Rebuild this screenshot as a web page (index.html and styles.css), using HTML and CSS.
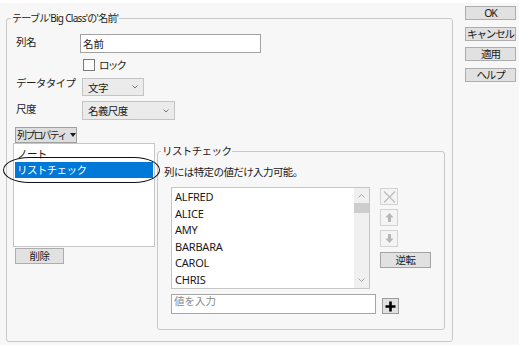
FILE: index.html
```html
<!DOCTYPE html>
<html>
  <head>
    <meta charset="utf-8" />
    <link rel="stylesheet" href="styles.css">
  </head>
  <body>
    <div class="window">
      <fieldset class="main">
        <legend>テーブル'Big Class'の'名前'</legend>
        <div class="form">
          <label class="lbl">列名</label>
          <input class="name" type="text" value="名前" />
          <span></span>
          <label class="lock"><span class="box"></span>ロック</label>
          <label class="lbl up">データタイプ</label>
          <div class="combo type">
            文字
            <svg width="6" height="4" viewBox="0 0 6 4"><polyline points="0.5,0.5 3,3 5.5,0.5" /></svg>
          </div>
          <label class="lbl">尺度</label>
          <div class="combo scale">
            名義尺度
            <svg width="6" height="4" viewBox="0 0 6 4"><polyline points="0.5,0.5 3,3 5.5,0.5" /></svg>
          </div>
        </div>
        <button class="props">列プロパティ<span class="tri"></span></button>
        <div class="lower">
          <div class="left">
            <div class="plist">
              <div class="item">ノート</div>
              <div class="item sel">リストチェック</div>
            </div>
            <button class="del">削除</button>
            <div class="ring"></div>
          </div>
          <fieldset class="check">
            <legend>リストチェック</legend>
            <div class="note">列には特定の値だけ入力可能。</div>
            <div class="values">
              <div class="vlist">
                <div class="rows">
                  <div class="row">ALFRED</div>
                  <div class="row">ALICE</div>
                  <div class="row">AMY</div>
                  <div class="row">BARBARA</div>
                  <div class="row">CAROL</div>
                  <div class="row">CHRIS</div>
                </div>
                <div class="scroll">
                  <svg class="caret" width="7" height="4" viewBox="0 0 7 4"><polyline points="0.5,3.5 3.5,0.5 6.5,3.5" /></svg>
                  <div class="thumb"></div>
                  <div class="track"></div>
                  <svg class="caret" width="7" height="4" viewBox="0 0 7 4"><polyline points="0.5,0.5 3.5,3.5 6.5,0.5" /></svg>
                </div>
              </div>
              <div class="tools">
                <button class="tool">
                  <svg width="13" height="12" viewBox="0 0 13 12"><path d="M1 0.5 L12 11.5 M12 0.5 L1 11.5" /></svg>
                </button>
                <button class="tool">
                  <svg width="9" height="9" viewBox="0 0 9 9"><path class="fill" d="M4.5 0 L8.5 4.5 L6 4.5 L6 9 L3 9 L3 4.5 L0.5 4.5 Z" /></svg>
                </button>
                <button class="tool">
                  <svg width="9" height="9" viewBox="0 0 9 9"><path class="fill" d="M4.5 9 L8.5 4.5 L6 4.5 L6 0 L3 0 L3 4.5 L0.5 4.5 Z" /></svg>
                </button>
                <button class="rev">逆転</button>
              </div>
            </div>
            <div class="add">
              <input class="value" type="text" placeholder="値を入力" />
              <button class="plus">
                <svg width="11" height="11" viewBox="0 0 11 11"><path d="M5.5 0.5 V10.5 M0.5 5.5 H10.5" /></svg>
              </button>
            </div>
          </fieldset>
        </div>
      </fieldset>
      <div class="side">
        <button>OK</button>
        <button>キャンセル</button>
        <button>適用</button>
        <button>ヘルプ</button>
      </div>
    </div>
  </body>
</html>
```

FILE: styles.css
```css
body {
  margin: 0;
  background: #ffffff;
  font-family: "Noto Sans", "Noto Sans CJK JP", sans-serif;
  font-size: 10.5px;
  letter-spacing: -0.6px;
  color: #1a1a1a;
}

.window {
  display: flex;
  align-items: flex-start;
  width: 519px;
  height: 342px;
  margin-top: 3px;
  background: #f7f7f7;
}

button {
  font-family: inherit;
  font-size: 10.5px;
  letter-spacing: inherit;
  white-space: nowrap;
  color: #1a1a1a;
  padding: 0;
  margin: 0;
  background: #e1e1e1;
  border: 1px solid #adadad;
  box-sizing: border-box;
  line-height: 12px;
}

fieldset {
  border: 1px solid #c8c8c8;
  border-radius: 3px;
  padding: 0;
  margin: 0;
  box-sizing: border-box;
  min-width: 0;
}
legend {
  padding: 0 1px;
  line-height: 13px;
  white-space: nowrap;
}

/* main group */
.main {
  width: 447px;
  height: 330px;
  margin: 9px 0 0 6px;
}
.main > legend {
  margin-left: 4px;
  font-size: 10px;
  letter-spacing: -0.7px;
}

.form {
  display: grid;
  grid-template-columns: 64px auto;
  grid-template-rows: 25px 19px 23px 19px;
  align-items: start;
  margin: 9px 0 0 9px;
}
.lbl {
  line-height: 15px;
  margin-top: 1px;
}
.lbl.up {
  margin-top: -2px;
}
.name {
  width: 181px;
  height: 19px;
  box-sizing: border-box;
  border: 1px solid #a2a2a2;
  background: #fff;
  padding: 0 2px;
  margin: 0;
  font-family: inherit;
  font-size: 10.5px;
  color: #1a1a1a;
  outline: none;
}
.lock {
  display: flex;
  align-items: center;
  margin-left: 3px;
  line-height: 12px;
  letter-spacing: -1.8px;
}
.box {
  width: 12px;
  height: 12px;
  box-sizing: border-box;
  border: 1px solid #7a7a7a;
  background: #fff;
  margin-right: 4px;
}
.combo {
  display: flex;
  align-items: center;
  justify-content: space-between;
  box-sizing: border-box;
  margin-left: 2px;
  padding: 0 5px 0 5px;
  background: #ebebeb;
  border: 1px solid #c4c4c4;
}
.combo svg polyline {
  fill: none;
  stroke: #777;
  stroke-width: 1;
}
.type {
  width: 62px;
  height: 18px;
}
.scale {
  width: 93px;
  height: 19px;
}

.props {
  display: flex;
  align-items: center;
  margin: 7px 0 0 8px;
  width: 62px;
  height: 16px;
  padding-left: 1px;
  font-size: 10px;
  letter-spacing: -1.8px;
  background: #dedede;
  border-color: #a0a0a0;
}
.tri {
  width: 0;
  height: 0;
  margin-left: 4px;
  border-left: 3.5px solid transparent;
  border-right: 3.5px solid transparent;
  border-top: 4px solid #1a1a1a;
}

/* lower part */
.lower {
  display: flex;
  align-items: flex-start;
}
.left {
  position: relative;
  margin-left: 6px;
  width: 142px;
}
.plist {
  height: 104px;
  box-sizing: border-box;
  border: 1px solid #c6c6c6;
  background: #fff;
  padding: 2px 1px 0;
}
.item {
  height: 16px;
  line-height: 16px;
  padding-left: 2px;
}
.item.sel {
  background: #0078d7;
  color: #fff;
}
.del {
  display: block;
  width: 49px;
  height: 16px;
  margin: 1px 0 0 2px;
}
.ring {
  position: absolute;
  left: -10px;
  top: 14px;
  width: 157px;
  height: 26px;
  box-sizing: border-box;
  border: 1.5px solid #111;
  border-radius: 26px / 13px;
}

.check {
  width: 288px;
  height: 185px;
  margin: 2px 0 0 2px;
}
.check > legend {
  margin-left: 3px;
}
.note {
  line-height: 14px;
  margin: 7px 0 0 6px;
}
.values {
  display: flex;
  align-items: flex-start;
  margin: 8px 0 0 13px;
}
.vlist {
  display: flex;
  width: 199px;
  height: 102px;
  box-sizing: border-box;
  border: 1px solid #c6c6c6;
  background: #fff;
  overflow: hidden;
}
.rows {
  flex: 1;
  padding: 1px 0 0 3px;
  font-size: 11px;
  letter-spacing: -0.2px;
}
.row {
  height: 16.6px;
  line-height: 16.6px;
}
.scroll {
  display: flex;
  flex-direction: column;
  align-items: center;
  width: 15px;
  background: #f0f0f0;
}
.caret {
  margin: 6px 0;
}
.caret polyline {
  fill: none;
  stroke: #a8a8a8;
  stroke-width: 1;
}
.thumb {
  width: 15px;
  height: 10px;
  background: #cdcdcd;
  margin-top: -1px;
}
.track {
  flex: 1;
}

.tools {
  display: flex;
  flex-direction: column;
  align-items: flex-start;
  gap: 4px;
  margin: 1px 0 0 10px;
}
.tool {
  display: flex;
  align-items: center;
  justify-content: center;
  width: 18px;
  height: 17px;
  background: #f4f4f4;
  border-color: #d2d2d2;
}
.tool path {
  fill: none;
  stroke: #bcbcbc;
  stroke-width: 1.2;
}
.tool path.fill {
  fill: #b5b5b5;
  stroke: none;
}
.rev {
  width: 51px;
  height: 16px;
  margin-top: 1px;
  border-color: #a4a4a4;
}

.add {
  display: flex;
  align-items: flex-start;
  margin: 5px 0 0 13px;
}
.value {
  width: 205px;
  height: 20px;
  box-sizing: border-box;
  border: 1px solid #a6a6a6;
  background: #fff;
  margin: 0;
  padding: 0 2px 6px;
  font-family: inherit;
  font-size: 10.5px;
  outline: none;
}
.value::placeholder {
  color: #8a8a8a;
}
.plus {
  display: flex;
  align-items: center;
  justify-content: center;
  width: 17px;
  height: 16px;
  margin: 4px 0 0 6px;
  border-color: #9c9c9c;
}
.plus path {
  stroke: #000;
  stroke-width: 2.6;
}

/* dialog buttons */
.side {
  display: flex;
  flex-direction: column;
  gap: 6.5px;
  margin: 3px 0 0 12px;
}
.side button {
  width: 51px;
  height: 14px;
  letter-spacing: -1.1px;
}
```
